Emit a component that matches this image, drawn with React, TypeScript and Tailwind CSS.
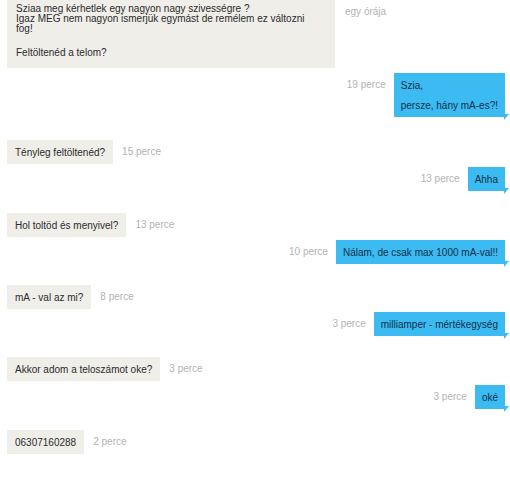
import React from 'react';

type Msg = {
    side: 'in' | 'out';
    lines: string[];
    time: string;
    mt: string;
};

const messages: Msg[] = [
    { side: 'out', lines: ['Szia,', 'persze, hány mA-es?!'], time: '19 perce', mt: 'mt-[5px]' },
    { side: 'in', lines: ['Tényleg feltöltenéd?'], time: '15 perce', mt: 'mt-[23px]' },
    { side: 'out', lines: ['Ahha'], time: '13 perce', mt: 'mt-[3px]' },
    { side: 'in', lines: ['Hol toltöd és menyivel?'], time: '13 perce', mt: 'mt-[22px]' },
    { side: 'out', lines: ['Nálam, de csak max 1000 mA-val!!'], time: '10 perce', mt: 'mt-[3px]' },
    { side: 'in', lines: ['mA - val az mi?'], time: '8 perce', mt: 'mt-[21px]' },
    { side: 'out', lines: ['milliamper - mértékegység'], time: '3 perce', mt: 'mt-[3px]' },
    { side: 'in', lines: ['Akkor adom a teloszámot oke?'], time: '3 perce', mt: 'mt-[21px]' },
    { side: 'out', lines: ['oké'], time: '3 perce', mt: 'mt-[4px]' },
    { side: 'in', lines: ['06307160288'], time: '2 perce', mt: 'mt-[21px]' },
];

function Time({ children }: { children: React.ReactNode }) {
    return <span className="text-[10px] leading-[24px] text-[#b3b3b3] whitespace-nowrap">{children}</span>;
}

function Incoming({ msg }: { msg: Msg }) {
    return (
        <div className={`flex items-start gap-[9px] ${msg.mt}`}>
            <div className="bg-[#efeee9] px-[8px] h-[24px] flex items-center text-[10px] text-[#2b2b2b] whitespace-nowrap">
                {msg.lines[0]}
            </div>
            <Time>{msg.time}</Time>
        </div>
    );
}

function Outgoing({ msg }: { msg: Msg }) {
    const multi = msg.lines.length > 1;
    return (
        <div className={`flex items-start justify-end gap-[8px] ${msg.mt}`}>
            <Time>{msg.time}</Time>
            <div className="relative">
                <div
                    className={`bg-[#3bbbf1] px-[7px] text-[10px] text-[#12304a] whitespace-nowrap ${
                        multi ? 'pt-[3px] pb-[1px] leading-[20px]' : 'h-[24px] flex items-center'
                    }`}
                >
                    {msg.lines.map((l, i) => (
                        <div key={i}>{l}</div>
                    ))}
                </div>
                {/* little tail bottom-right */}
                <div className="absolute right-[-4px] bottom-[-3px] w-0 h-0 border-t-[6px] border-t-[#3bbbf1] border-r-[5px] border-r-transparent" />
            </div>
        </div>
    );
}

export default function App() {
    return (
        <div
            className="w-[510px] h-[492px] bg-white pl-[7px] pr-[5px] overflow-hidden"
            style={{ fontFamily: '"Liberation Sans", Arial, sans-serif' }}
        >
            {/* first long message */}
            <div className="flex items-start gap-[10px]">
                <div className="bg-[#efeee9] w-[328px] h-[68px] pl-[9px] pt-[4px] text-[10px] leading-[10px] text-[#2b2b2b]">
                    <div>Sziaa meg kérhetlek egy nagyon nagy szivességre ?</div>
                    <div>Igaz MEG nem nagyon ismerjük egymást de remélem ez változni</div>
                    <div>fog!</div>
                    <div className="mt-[14px]">Feltöltenéd a telom?</div>
                </div>
                <span className="text-[10px] leading-[24px] text-[#b3b3b3]">egy órája</span>
            </div>

            {messages.map((m, i) =>
                m.side === 'in' ? <Incoming key={i} msg={m} /> : <Outgoing key={i} msg={m} />
            )}
        </div>
    );
}
